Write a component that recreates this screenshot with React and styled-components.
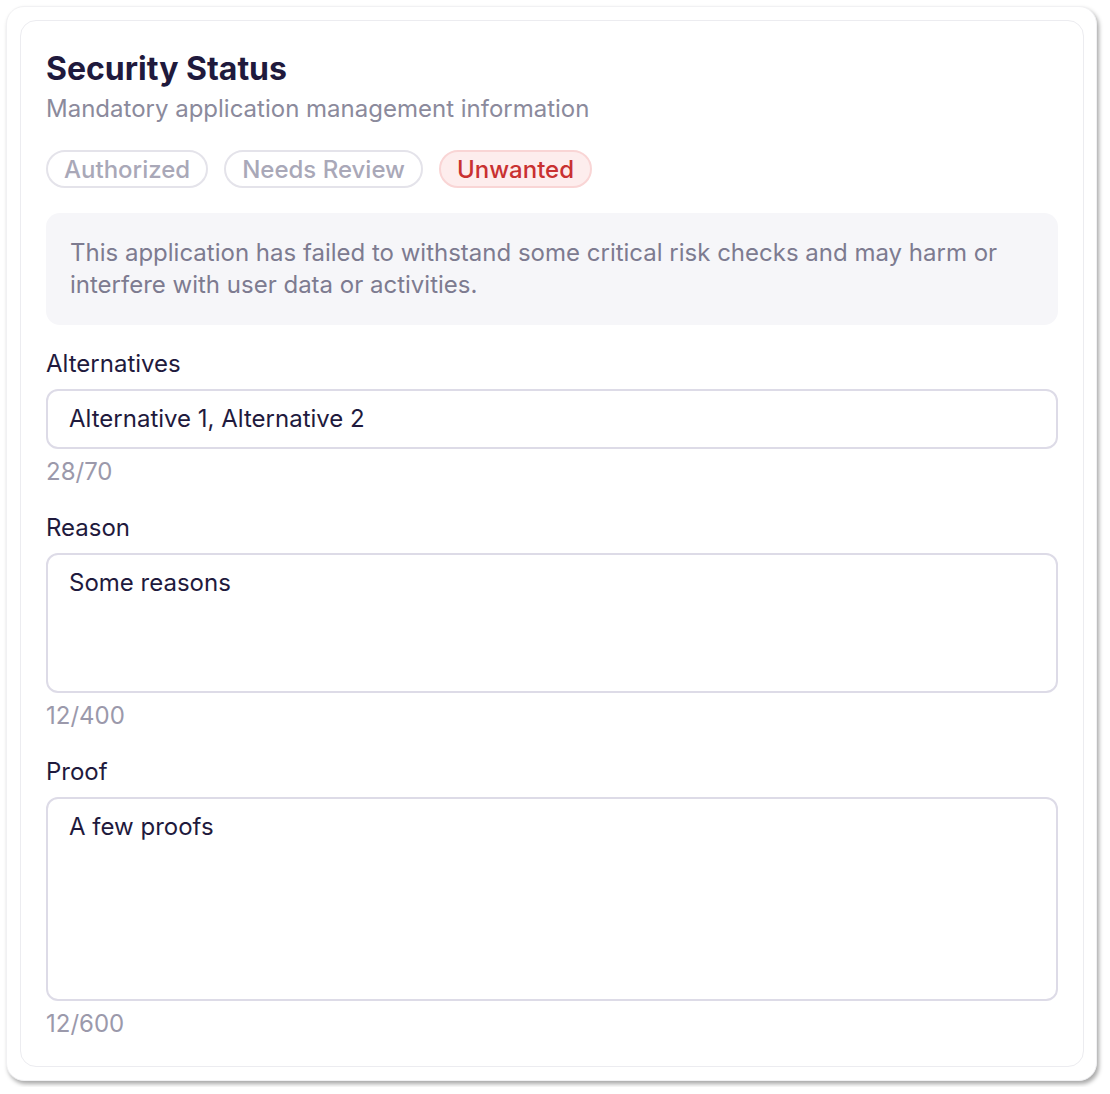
import React from 'react';
import styled, { createGlobalStyle } from 'styled-components';

const GlobalStyle = createGlobalStyle`
  * { box-sizing: border-box; }
  body {
    margin: 0;
    background: #ffffff;
    font-family: Inter, "Noto Sans", sans-serif;
    -webkit-font-smoothing: antialiased;
  }
`;

const Page = styled.div`
  padding: 6px;
`;

const Frame = styled.div`
  width: 1091px;
  padding: 13px 12px 13px 13px;
  background: #ffffff;
  border-radius: 18px;
  border: 1px solid #f1f1f3;
  box-shadow: 2px 3px 4px rgba(0, 0, 0, 0.34);
`;

const Card = styled.div`
  border: 1px solid #ececf0;
  border-radius: 16px;
  padding: 28px 25px 27px;
  display: flex;
  flex-direction: column;
`;

const Title = styled.h1`
  margin: 0;
  font-size: 32px;
  line-height: 40px;
  font-weight: 700;
  color: #1f1a3d;
`;

const Subtitle = styled.p`
  margin: 4px 0 0;
  font-size: 24px;
  line-height: 32px;
  color: #8b8a9c;
`;

const ChipRow = styled.div`
  display: flex;
  gap: 16px;
  margin-top: 25px;
`;

const Chip = styled.span`
  display: inline-flex;
  align-items: center;
  height: 38px;
  padding: 0 16px;
  border-radius: 19px;
  font-size: 24px;
  font-weight: 500;
  border: 2px solid ${p => (p.$active ? '#f9d5d5' : '#e4e3ea')};
  background: ${p => (p.$active ? '#fdeded' : '#ffffff')};
  color: ${p => (p.$active ? '#c93131' : '#a9a8b8')};
`;

const Notice = styled.div`
  margin-top: 25px;
  padding: 24px 24px;
  background: #f6f6f9;
  border-radius: 14px;
  font-size: 24px;
  line-height: 32px;
  color: #7d7b90;
`;

const Field = styled.div`
  display: flex;
  flex-direction: column;
  margin-top: ${p => p.$top || 26}px;
`;

const Label = styled.label`
  font-size: 24px;
  line-height: 30px;
  color: #1f1a3d;
  margin-bottom: 10px;
`;

const Input = styled.div`
  height: ${p => p.$height || 60}px;
  border: 2px solid #dddbe7;
  border-radius: 12px;
  padding: 14px 21px;
  font-size: 24px;
  line-height: 28px;
  color: #1f1a3d;
`;

const Counter = styled.span`
  margin-top: 8px;
  font-size: 24px;
  line-height: 30px;
  color: #9b99ab;
`;

const fields = [
  { label: 'Alternatives', value: 'Alternative 1, Alternative 2', count: '28/70', height: 60, top: 24 },
  { label: 'Reason', value: 'Some reasons', count: '12/400', height: 140 },
  { label: 'Proof', value: 'A few proofs', count: '12/600', height: 204 },
];

export default function App() {
  return (
    <>
      <GlobalStyle />
      <Page>
        <Frame>
          <Card>
            <Title>Security Status</Title>
            <Subtitle>Mandatory application management information</Subtitle>
            <ChipRow>
              <Chip>Authorized</Chip>
              <Chip>Needs Review</Chip>
              <Chip $active>Unwanted</Chip>
            </ChipRow>
            <Notice>
              This application has failed to withstand some critical risk checks and may harm or
              interfere with user data or activities.
            </Notice>
            {fields.map(f => (
              <Field key={f.label} $top={f.top}>
                <Label>{f.label}</Label>
                <Input $height={f.height}>{f.value}</Input>
                <Counter>{f.count}</Counter>
              </Field>
            ))}
          </Card>
        </Frame>
      </Page>
    </>
  );
}
